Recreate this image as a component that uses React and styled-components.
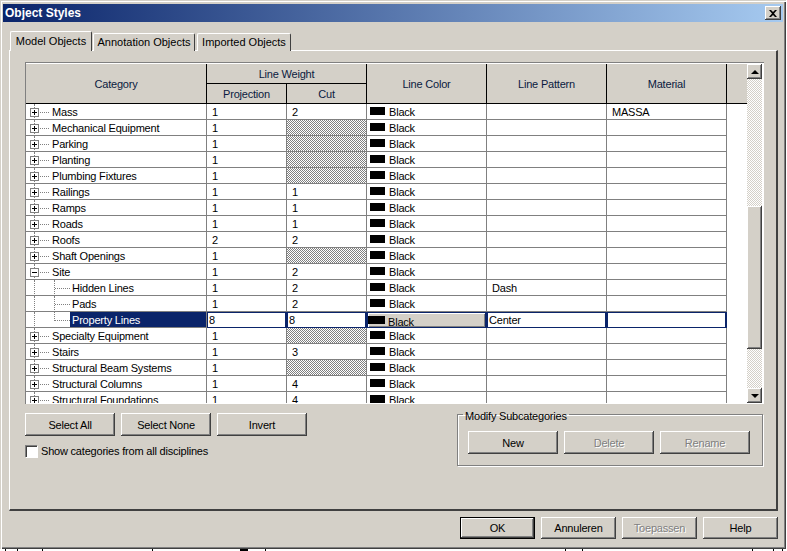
import React from "react";
import styled, { createGlobalStyle, css } from "styled-components";

const FACE = "#d4d0c8";
const NAVY = "#0a246a";
const GRID = "#808080";

const GlobalStyle = createGlobalStyle`
  html, body {
    margin: 0;
    padding: 0;
    background: #fff;
    overflow: hidden;
  }
  * {
    box-sizing: border-box;
  }
`;

const raised = css`
  box-shadow: inset -1px -1px #404040, inset 1px 1px #fff, inset -2px -2px ${GRID}, inset 2px 2px ${FACE};
`;

const Page = styled.div`
  width: 787px;
  height: 551px;
  background: #fff;
  font-family: "Liberation Sans", Arial, sans-serif;
  font-size: 11px;
  letter-spacing: -0.2px;
  color: #000;
`;

const Dialog = styled.div`
  width: 786px;
  height: 549px;
  padding: 4px 3px 0 3px;
  background: ${FACE};
  display: flex;
  flex-direction: column;
  box-shadow: inset 1px 1px ${FACE}, inset 2px 2px #fff, inset -1px -1px #404040, inset -2px -2px ${GRID};
`;

const TitleBar = styled.div`
  height: 18px;
  width: 780px;
  flex: none;
  padding: 0 2px;
  display: flex;
  align-items: center;
  justify-content: space-between;
  background: linear-gradient(90deg, ${NAVY}, #a6caf0);
  color: #fff;
  font-weight: bold;
  font-size: 12px;
  letter-spacing: 0;
`;

const CloseButton = styled.div`
  width: 16px;
  height: 14px;
  background: ${FACE};
  display: flex;
  align-items: center;
  justify-content: center;
  ${raised}
`;

const TabStrip = styled.div`
  display: flex;
  align-items: flex-end;
  height: 20px;
  margin: 9px 0 0 7px;
  position: relative;
  z-index: 1;
  letter-spacing: 0;
`;

const Tab = styled.div`
  height: ${(p) => (p.$active ? "20px" : "18px")};
  width: ${(p) => p.$width}px;
  margin-right: ${(p) => (p.$active ? "1px" : "2px")};
  padding-bottom: 2px;
  background: ${FACE};
  display: flex;
  align-items: center;
  justify-content: center;
  border-top: 1px solid #fff;
  border-left: 1px solid #fff;
  border-right: 1px solid #404040;
  border-radius: 2px 2px 0 0;
`;

const Panel = styled.div`
  width: 769px;
  height: 461px;
  margin: -1px 0 0 6px;
  padding: 11px 13px 0 15px;
  background: ${FACE};
  border-top: 1px solid #fff;
  border-left: 1px solid #fff;
  border-right: 2px solid #404040;
  border-bottom: 2px solid #404040;
`;

const TableFrame = styled.div`
  width: 739px;
  height: 342px;
  display: flex;
  padding: 2px 1px 1px 1px;
  background: #fff;
  box-shadow: inset 1px 1px ${GRID}, inset -1px -1px #fff;
`;

const TableClip = styled.div`
  width: 721px;
  height: 339px;
  overflow: hidden;
  flex: none;
`;

const HeaderGrid = styled.div`
  display: grid;
  grid-template-columns: 181px 80px 80px 120px 120px 120px 20px;
  grid-template-rows: 20px 20px;
  background: ${FACE};
  color: #0a1a40;
`;

const HeadCell = styled.div`
  display: flex;
  align-items: center;
  justify-content: center;
  border-right: ${(p) => (p.$last ? "0" : "1px solid #000")};
  border-bottom: 1px solid #000;
  grid-column: ${(p) => p.$col || "auto"};
  grid-row: ${(p) => p.$row || "auto"};
`;

const Row = styled.div`
  display: grid;
  grid-template-columns: 181px 80px 80px 120px 120px 120px;
  grid-template-rows: 16px;
  height: 16px;
  background: #fff;
`;

const Cell = styled.div`
  display: flex;
  align-items: center;
  padding: 1px 0 0 5px;
  border-right: 1px solid ${GRID};
  border-bottom: 1px solid ${GRID};
  line-height: 15px;
  white-space: nowrap;
`;

const HatchCell = styled(Cell)`
  background: repeating-conic-gradient(${GRID} 0 25%, #fff 0 50%) 0 0 / 2px 2px;
`;

const EditCell = styled(Cell)`
  padding: 0 0 0 1px;
  border: 1px solid ${NAVY};
  border-right-width: 2px;
  line-height: 14px;
`;

const ColorEdit = styled(EditCell)`
  padding: 0;
  background: ${NAVY};
`;

const ColorButton = styled.div`
  width: 100%;
  height: 100%;
  background: ${FACE};
  display: flex;
  align-items: center;
  padding-top: 3px;
  box-shadow: inset 1px 1px #fff, inset -1px -1px ${GRID};
  line-height: 12px;
`;

const Swatch = styled.span`
  width: ${(p) => (p.$edit ? "17px" : "15px")};
  height: 8px;
  background: #000;
  margin: ${(p) => (p.$edit ? "0 3px 4px 0" : "0 4px 2px -2px")};
  flex: none;
`;

const TreeCell = styled.div`
  position: relative;
  display: flex;
  align-items: flex-start;
  border-right: 1px solid ${GRID};
  border-bottom: 1px solid ${GRID};
  padding-left: ${(p) => (p.$child ? "28px" : "4px")};
  white-space: nowrap;

  &::before {
    content: "";
    position: absolute;
    left: 8px;
    top: 0;
    bottom: -1px;
    border-left: 1px dotted ${GRID};
  }
`;

const Expander = styled.span`
  width: 9px;
  height: 9px;
  flex: none;
  position: relative;
  z-index: 1;
  border: 1px solid ${GRID};
  background: #fff;
  margin-top: 4px;
  display: block;

  &::before {
    content: "";
    position: absolute;
    left: 1px;
    right: 1px;
    top: 3px;
    height: 1px;
    background: #000;
  }

  ${(p) =>
    !p.$open &&
    css`
      &::after {
        content: "";
        position: absolute;
        top: 1px;
        bottom: 1px;
        left: 3px;
        width: 1px;
        background: #000;
      }
    `}
`;

const Connector = styled.span`
  width: 9px;
  margin: 8px 1px 0 1px;
  flex: none;
  border-top: 1px dotted ${GRID};
`;

const Elbow = styled.span`
  width: 16px;
  flex: none;
  height: ${(p) => (p.$last ? "9px" : "16px")};
  border-left: 1px dotted ${GRID};
  position: relative;

  &::after {
    content: "";
    position: absolute;
    left: 0;
    right: 0;
    top: 8px;
    border-top: 1px dotted ${GRID};
  }
`;

const Label = styled.span`
  height: ${(p) => (p.$selected ? "15px" : "14px")};
  line-height: ${(p) => (p.$selected ? "17px" : "15px")};
  margin-top: ${(p) => (p.$selected ? "0" : "1px")};
  padding-left: 2px;
  flex: ${(p) => (p.$selected ? "1" : "none")};
  background: ${(p) => (p.$selected ? NAVY : "transparent")};
  color: ${(p) => (p.$selected ? "#fff" : "inherit")};
`;

const Scrollbar = styled.div`
  width: 15px;
  height: 339px;
  flex: none;
  display: flex;
  flex-direction: column;
  background: repeating-conic-gradient(${FACE} 0 25%, #fff 0 50%) 0 0 / 2px 2px;
`;

const ScrollButton = styled.div`
  height: 15px;
  flex: none;
  background: ${FACE};
  display: flex;
  align-items: center;
  justify-content: center;
  ${raised}
`;

const ScrollThumb = styled.div`
  height: 143px;
  margin-top: 127px;
  flex: none;
  background: ${FACE};
  ${raised}
`;

const ScrollGap = styled.div`
  flex: 1;
`;

const Arrow = styled.span`
  width: 0;
  height: 0;
  border-left: 4px solid transparent;
  border-right: 4px solid transparent;
  ${(p) =>
    p.$down
      ? css`
          border-top: 4px solid #000;
        `
      : css`
          border-bottom: 4px solid #000;
        `}
`;

const Lower = styled.div`
  display: flex;
  justify-content: space-between;
  align-items: flex-start;
  width: 738px;
`;

const LeftControls = styled.div`
  padding-top: 9px;
`;

const ButtonRow = styled.div`
  display: flex;
  gap: 6px;
`;

const Button = styled.div`
  width: ${(p) => p.$width || 90}px;
  height: ${(p) => p.$height || 23}px;
  display: flex;
  align-items: center;
  justify-content: center;
  background: ${FACE};
  ${raised}
  ${(p) =>
    p.$disabled &&
    css`
      color: ${GRID};
      text-shadow: 1px 1px 0 #fff;
    `}
  ${(p) =>
    p.$default &&
    css`
      box-shadow: inset 0 0 0 1px #000, inset -2px -2px #404040, inset 2px 2px #fff, inset -3px -3px ${GRID};
    `}
`;

const CheckRow = styled.div`
  display: flex;
  align-items: center;
  gap: 4px;
  margin-top: 9px;
`;

const CheckBox = styled.span`
  width: 12px;
  height: 12px;
  flex: none;
  background: #fff;
  border-top: 1px solid ${GRID};
  border-left: 1px solid ${GRID};
  box-shadow: inset 1px 1px #404040, 1px 1px 0 #fff;
`;

const GroupBox = styled.fieldset`
  width: 306px;
  height: 60px;
  margin: 2px 0 0;
  padding: 8px 10px 0 10px;
  border: 1px solid ${GRID};
  box-shadow: 1px 1px 0 #fff, inset 1px 1px 0 #fff;
`;

const GroupTitle = styled.legend`
  padding: 4px 2px 0;
  margin-left: -5px;
  line-height: 13px;
`;

const Footer = styled.div`
  display: flex;
  justify-content: flex-end;
  gap: 6px;
  padding: 6px 5px 0 0;
`;

const DesktopEdge = styled.svg`
  display: block;
  width: 787px;
  height: 2px;
`;

const hatch = null;

const rows = [
  { name: "Mass", p: 1, c: 2, material: "MASSA" },
  { name: "Mechanical Equipment", p: 1, c: hatch },
  { name: "Parking", p: 1, c: hatch },
  { name: "Planting", p: 1, c: hatch },
  { name: "Plumbing Fixtures", p: 1, c: hatch },
  { name: "Railings", p: 1, c: 1 },
  { name: "Ramps", p: 1, c: 1 },
  { name: "Roads", p: 1, c: 1 },
  { name: "Roofs", p: 2, c: 2 },
  { name: "Shaft Openings", p: 1, c: hatch },
  { name: "Site", p: 1, c: 2, open: true },
  { name: "Hidden Lines", p: 1, c: 2, child: true, pattern: "Dash" },
  { name: "Pads", p: 1, c: 2, child: true },
  { name: "Property Lines", p: 8, c: 8, child: true, last: true, selected: true, pattern: "Center" },
  { name: "Specialty Equipment", p: 1, c: hatch },
  { name: "Stairs", p: 1, c: 3 },
  { name: "Structural Beam Systems", p: 1, c: hatch },
  { name: "Structural Columns", p: 1, c: 4 },
  { name: "Structural Foundations", p: 1, c: 4 },
];

const desktopTicks = [5, 17, 42, 152, 240, 241, 242, 243, 244, 245, 246, 247, 265, 565, 582, 752, 773, 782];

function CategoryRow({ row }) {
  const tree = (
    <TreeCell $child={row.child}>
      {row.child ? <Elbow $last={row.last} /> : <Expander $open={row.open} />}
      {!row.child && <Connector />}
      <Label $selected={row.selected}>{row.name}</Label>
    </TreeCell>
  );

  if (row.selected) {
    return (
      <Row>
        {tree}
        <EditCell>{row.p}</EditCell>
        <EditCell>{row.c}</EditCell>
        <ColorEdit>
          <ColorButton>
            <Swatch $edit />
            Black
          </ColorButton>
        </ColorEdit>
        <EditCell>{row.pattern}</EditCell>
        <EditCell />
      </Row>
    );
  }

  return (
    <Row>
      {tree}
      <Cell>{row.p}</Cell>
      {row.c === hatch ? <HatchCell /> : <Cell>{row.c}</Cell>}
      <Cell>
        <Swatch />
        Black
      </Cell>
      <Cell>{row.pattern}</Cell>
      <Cell>{row.material}</Cell>
    </Row>
  );
}

export default function App() {
  return (
    <Page>
      <GlobalStyle />
      <Dialog>
        <TitleBar>
          Object Styles
          <CloseButton>
            <svg width="8" height="7" viewBox="0 0 8 7">
              <path d="M0 0h2l2 2 2-2h2L5 3.500 8 7H6L4 5 2 7H0l3-3.500z" fill="#000" />
            </svg>
          </CloseButton>
        </TitleBar>
        <TabStrip>
          <Tab $active $width={82}>Model Objects</Tab>
          <Tab $width={102}>Annotation Objects</Tab>
          <Tab $width={94}>Imported Objects</Tab>
        </TabStrip>
        <Panel>
          <TableFrame>
            <TableClip>
              <HeaderGrid>
                <HeadCell $col="1" $row="1 / 3">Category</HeadCell>
                <HeadCell $col="2 / 4" $row="1">Line Weight</HeadCell>
                <HeadCell $col="2" $row="2">Projection</HeadCell>
                <HeadCell $col="3" $row="2">Cut</HeadCell>
                <HeadCell $col="4" $row="1 / 3">Line Color</HeadCell>
                <HeadCell $col="5" $row="1 / 3">Line Pattern</HeadCell>
                <HeadCell $col="6" $row="1 / 3">Material</HeadCell>
                <HeadCell $col="7" $row="1 / 3" $last />
              </HeaderGrid>
              {rows.map((row) => (
                <CategoryRow key={row.name} row={row} />
              ))}
            </TableClip>
            <Scrollbar>
              <ScrollButton><Arrow /></ScrollButton>
              <ScrollThumb />
              <ScrollGap />
              <ScrollButton><Arrow $down /></ScrollButton>
            </Scrollbar>
          </TableFrame>
          <Lower>
            <LeftControls>
              <ButtonRow>
                <Button>Select All</Button>
                <Button>Select None</Button>
                <Button>Invert</Button>
              </ButtonRow>
              <CheckRow>
                <CheckBox />
                Show categories from all disciplines
              </CheckRow>
            </LeftControls>
            <GroupBox>
              <GroupTitle>Modify Subcategories</GroupTitle>
              <ButtonRow>
                <Button>New</Button>
                <Button $disabled>Delete</Button>
                <Button $disabled>Rename</Button>
              </ButtonRow>
            </GroupBox>
          </Lower>
        </Panel>
        <Footer>
          <Button $default $width={75} $height={22}>OK</Button>
          <Button $width={75} $height={22}>Annuleren</Button>
          <Button $disabled $width={75} $height={22}>Toepassen</Button>
          <Button $width={75} $height={22}>Help</Button>
        </Footer>
      </Dialog>
      <DesktopEdge viewBox="0 0 787 2">
        {desktopTicks.map((x) => (
          <rect key={x} x={x} y="0" width="1" height="2" fill="#000" />
        ))}
      </DesktopEdge>
    </Page>
  );
}
